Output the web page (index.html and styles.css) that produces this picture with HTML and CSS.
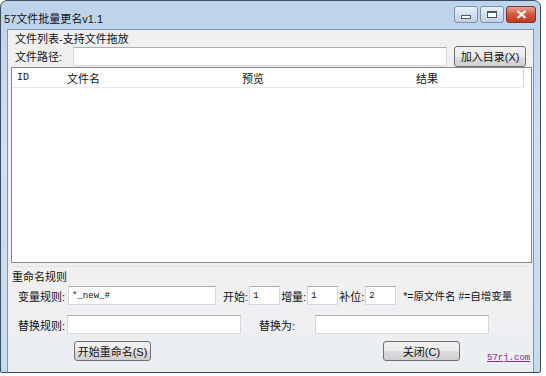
FILE: index.html
```html
<!DOCTYPE html>
<html lang="zh-cn">
<head>
    <meta charset="utf-8"/>
    <title>57文件批量更名v1.1</title>
    <link rel="stylesheet" href="styles.css">
</head>
<body>
    <div class="window">
        <div class="titlebar">
            <span class="title">57文件批量更名v1.1</span>
            <div class="caption">
                <span class="cbtn min"><i></i></span>
                <span class="cbtn max"><i></i></span>
                <span class="cbtn close">
                    <svg width="11" height="9" viewBox="0 0 11 9"><path d="M1.5 1 L9.5 8 M9.5 1 L1.5 8" stroke="#fff" stroke-width="2.2"/></svg>
                </span>
            </div>
        </div>
        <div class="client">
            <div class="group-title">文件列表-支持文件拖放</div>
            <div class="pathrow">
                <span class="label">文件路径:</span>
                <span class="input path"></span>
                <span class="btn add">加入目录(X)</span>
            </div>
            <div class="list">
                <div class="list-head">
                    <span class="col c-id">ID</span>
                    <span class="col c-name">文件名</span>
                    <span class="col c-prev">预览</span>
                    <span class="col c-res">结果</span>
                </div>
            </div>
            <div class="rules">
                <div class="rules-title">重命名规则</div>
                <div class="row r1">
                    <span class="label">变量规则:</span>
                    <span class="input var">*_new_#</span>
                    <span class="label l-start">开始:</span>
                    <span class="input num">1</span>
                    <span class="label">增量:</span>
                    <span class="input num">1</span>
                    <span class="label">补位:</span>
                    <span class="input num">2</span>
                    <span class="hint">*=原文件名 #=自增变量</span>
                </div>
                <div class="row r2">
                    <span class="label">替换规则:</span>
                    <span class="input rep"></span>
                    <span class="label l-to">替换为:</span>
                    <span class="input rep2"></span>
                </div>
                <div class="row r3">
                    <span class="btn start">开始重命名(S)</span>
                    <span class="btn closebtn">关闭(C)</span>
                    <a class="site">57rj.com</a>
                </div>
            </div>
        </div>
    </div>
</body>
</html>
```

FILE: styles.css
```css
* {
    box-sizing: border-box;
    font-family: "Liberation Sans", "Noto Sans CJK SC", sans-serif;
}
body {
    margin: 0;
    background: #fff;
}
.window {
    width: 541px;
    height: 373px;
    border: 1px solid #3d4e63;
    border-radius: 7px 7px 2px 2px;
    background: linear-gradient(#bcd3ec, #cfe0f2 40%, #c6daef);
    display: flex;
    flex-direction: column;
}
.titlebar {
    height: 28px;
    display: flex;
    align-items: flex-start;
    justify-content: space-between;
}
.title {
    font-size: 11px;
    color: #111;
    margin: 9px 0 0 3px;
}
.caption {
    display: flex;
    gap: 2px;
    margin: 5px 4px 0 0;
}
.cbtn {
    height: 17px;
    border: 1px solid #7d90a8;
    border-radius: 3px;
    display: flex;
    align-items: center;
    justify-content: center;
    background: linear-gradient(#eaf1f9, #d2e0f0 50%, #bed0e6);
}
.cbtn.min {
    width: 24px;
}
.cbtn.min i {
    width: 10px;
    height: 4px;
    margin-top: 5px;
    border: 1px solid #4a5a70;
    background: #fff;
}
.cbtn.max {
    width: 24px;
}
.cbtn.max i {
    width: 10px;
    height: 7px;
    border: 1px solid #4a5a70;
    border-top-width: 2px;
    background: #fff;
}
.cbtn.close {
    width: 30px;
    border-color: #7a3226;
    background: linear-gradient(#e8a393, #d2563c 50%, #c03a1e);
}
.client {
    margin: 0 6px 0 6px;
    flex: 1;
    border: 1px solid #8295ad;
    border-bottom: none;
    background: linear-gradient(#f0f0f0, #f0f0f0 75%, #eaeef3);
    padding: 0 2px;
    font-size: 11px;
    color: #111;
}
.group-title {
    margin: 2px 0 0 5px;
    line-height: 14px;
}
.pathrow {
    display: flex;
    align-items: center;
    height: 20px;
}
.label {
    padding-left: 5px;
    white-space: nowrap;
}
.input {
    background: #fff;
    border: 1px solid #d4d9df;
    border-top-color: #abadb3;
    height: 19px;
    font-size: 9px;
    font-family: "Liberation Mono", monospace;
    padding: 4px 0 0 3px;
}
.input.path {
    width: 374px;
    margin-left: 11px;
}
.btn {
    border: 1px solid #707070;
    border-radius: 3px;
    background: linear-gradient(#f2f2f2, #ebebeb 50%, #dddddd 51%, #cfcfcf);
    display: flex;
    align-items: center;
    justify-content: center;
    height: 21px;
    color: #111;
    white-space: nowrap;
}
.btn.add {
    width: 72px;
    margin-left: 7px;
}
.list {
    margin: 1px 0 0 1px;
    width: 521px;
    height: 196px;
    border: 1px solid #828790;
    background: #fff;
}
.list-head {
    display: flex;
    height: 20px;
    width: 512px;
    align-items: center;
    border-bottom: 1px solid #eaeaea;
    border-right: 1px solid #d5d5d5;
}
.col {
    white-space: nowrap;
}
.c-id {
    width: 55px;
    padding-left: 5px;
    font-family: "Liberation Mono", monospace;
    font-size: 10px;
}
.c-name {
    width: 175px;
}
.c-prev {
    width: 174px;
}
.rules {
    margin: 3px 0 0 2px;
    border-top: 1px solid #dfe2e6;
}
.rules-title {
    margin-top: 3px;
    line-height: 14px;
}
.row {
    display: flex;
    align-items: center;
}
.r1 {
    margin-top: 2px;
}
.r1 .label, .r2 .label {
    padding-left: 6px;
}
.input.var {
    width: 148px;
    margin: 0 6px 0 3px;
}
.input.num {
    width: 31px;
    margin-left: 1px;
}
.r1 .l-start {
    padding-left: 1px;
}
.r1 .input.num + .label {
    padding-left: 1px;
}
.hint {
    margin-left: 7px;
    white-space: nowrap;
    font-size: 10.5px;
}
.r2 {
    margin-top: 10px;
}
.input.rep {
    width: 174px;
    margin-left: 2px;
}
.r2 .l-to {
    padding-left: 18px;
}
.input.rep2 {
    width: 174px;
    margin-left: 20px;
}
.r3 {
    margin-top: 7px;
    align-items: flex-start;
}
.btn.start {
    width: 77px;
    height: 20px;
    margin-left: 62px;
}
.btn.closebtn {
    width: 77px;
    height: 20px;
    margin-left: 232px;
}
.site {
    margin: 12px 0 0 27px;
    font-family: "Liberation Mono", monospace;
    font-size: 9px;
    color: #8a2a8a;
    text-decoration: underline;
}
```
